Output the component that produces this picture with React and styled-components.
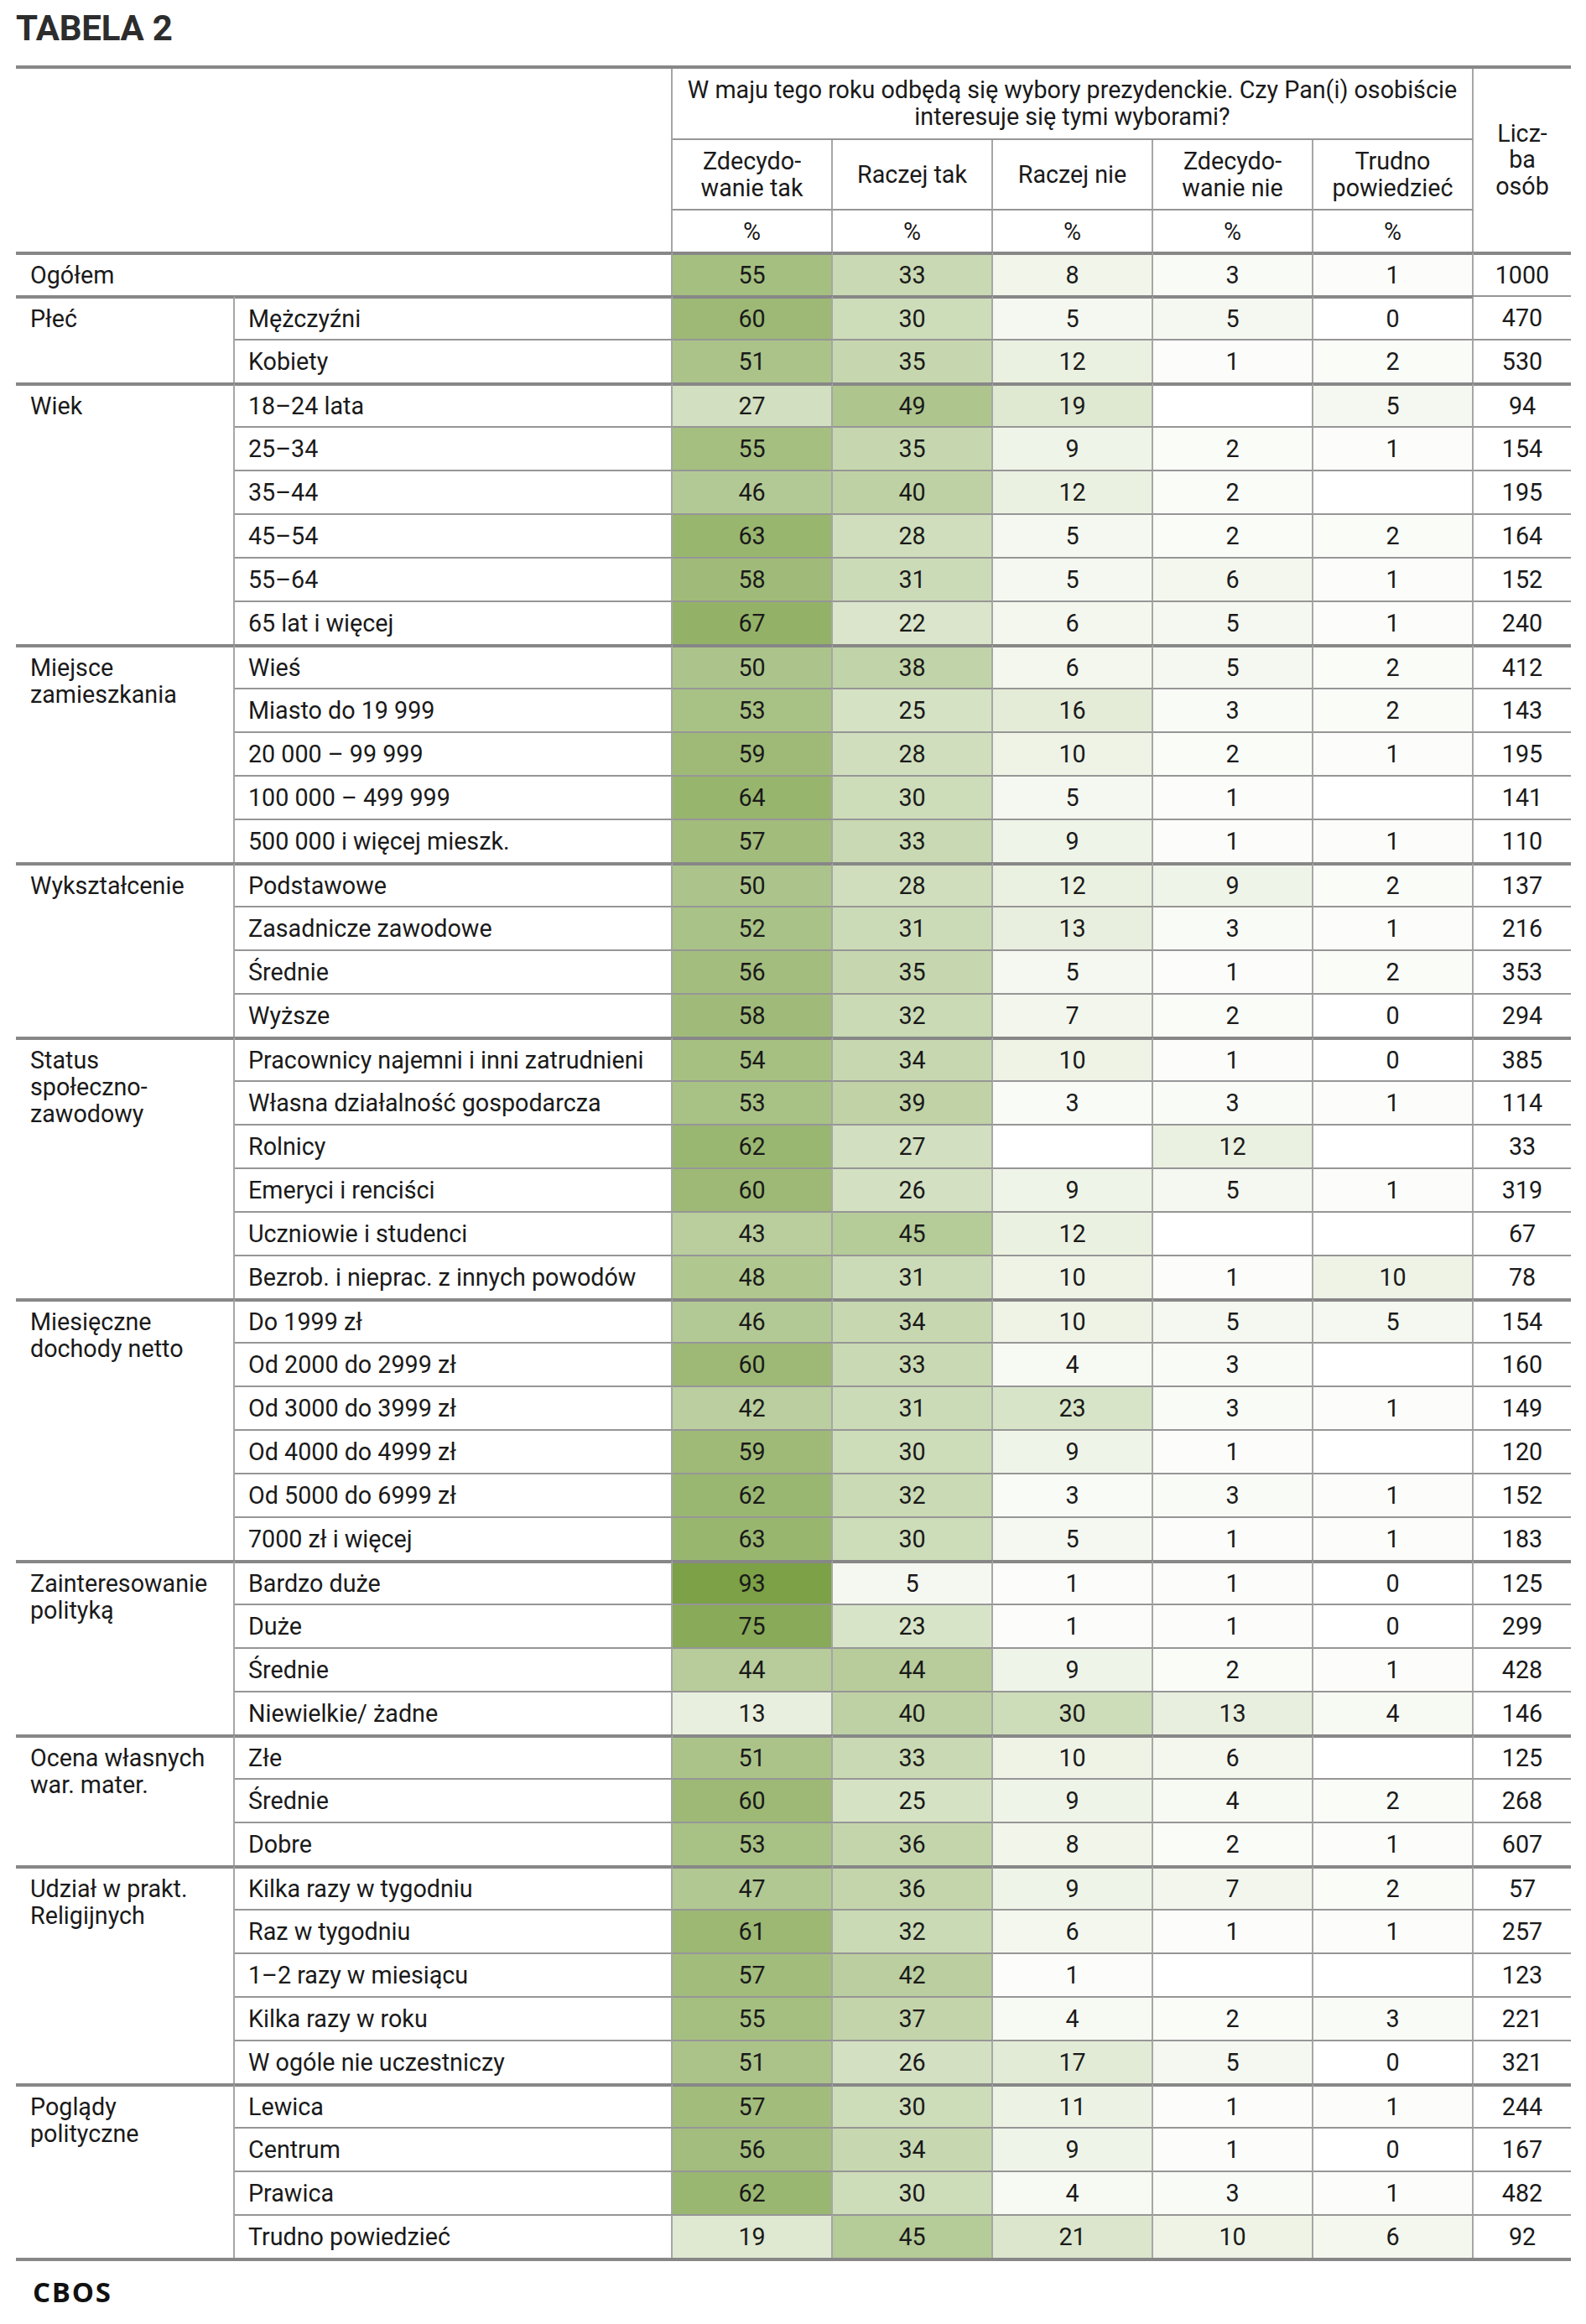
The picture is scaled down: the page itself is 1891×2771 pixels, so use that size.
import React from 'react';
import styled, { createGlobalStyle, css } from 'styled-components';

const GlobalStyle = createGlobalStyle`
  body {
    margin: 0;
    background: #fff;
    font-family: Roboto, "Liberation Sans", sans-serif;
    color: #1a1a1a;
  }
`;

const THICK = '4px solid #878787';
const THIN = '2px solid #969696';
const VLINE = '2px solid #a6a6a6';

// colour scale for the percentage cells
const stops = [
  [0, [255, 255, 255]],
  [1, [252, 253, 251]],
  [5, [245, 248, 240]],
  [10, [238, 243, 230]],
  [20, [221, 231, 207]],
  [30, [205, 220, 185]],
  [40, [190, 209, 164]],
  [50, [172, 196, 139]],
  [60, [157, 185, 117]],
  [75, [137, 170, 88]],
  [93, [124, 161, 70]],
  [100, [118, 156, 62]],
];

const shade = (v) => {
  if (v === null || v === undefined) return '#ffffff';
  for (let i = 1; i < stops.length; i++) {
    const [v1, c1] = stops[i];
    const [v0, c0] = stops[i - 1];
    if (v <= v1) {
      const t = (v - v0) / (v1 - v0);
      const c = c0.map((x, k) => Math.round(x + (c1[k] - x) * t));
      return `rgb(${c.join(',')})`;
    }
  }
  return 'rgb(118,156,62)';
};

const groups = [
  {
    label: 'Płeć',
    rows: [
      ['Mężczyźni', 60, 30, 5, 5, 0, 470],
      ['Kobiety', 51, 35, 12, 1, 2, 530],
    ],
  },
  {
    label: 'Wiek',
    rows: [
      ['18–24 lata', 27, 49, 19, null, 5, 94],
      ['25–34', 55, 35, 9, 2, 1, 154],
      ['35–44', 46, 40, 12, 2, null, 195],
      ['45–54', 63, 28, 5, 2, 2, 164],
      ['55–64', 58, 31, 5, 6, 1, 152],
      ['65 lat i więcej', 67, 22, 6, 5, 1, 240],
    ],
  },
  {
    label: ['Miejsce', 'zamieszkania'],
    rows: [
      ['Wieś', 50, 38, 6, 5, 2, 412],
      ['Miasto do 19 999', 53, 25, 16, 3, 2, 143],
      ['20 000 – 99 999', 59, 28, 10, 2, 1, 195],
      ['100 000 – 499 999', 64, 30, 5, 1, null, 141],
      ['500 000 i więcej mieszk.', 57, 33, 9, 1, 1, 110],
    ],
  },
  {
    label: 'Wykształcenie',
    rows: [
      ['Podstawowe', 50, 28, 12, 9, 2, 137],
      ['Zasadnicze zawodowe', 52, 31, 13, 3, 1, 216],
      ['Średnie', 56, 35, 5, 1, 2, 353],
      ['Wyższe', 58, 32, 7, 2, 0, 294],
    ],
  },
  {
    label: ['Status', 'społeczno-', 'zawodowy'],
    rows: [
      ['Pracownicy najemni i inni zatrudnieni', 54, 34, 10, 1, 0, 385],
      ['Własna działalność gospodarcza', 53, 39, 3, 3, 1, 114],
      ['Rolnicy', 62, 27, null, 12, null, 33],
      ['Emeryci i renciści', 60, 26, 9, 5, 1, 319],
      ['Uczniowie i studenci', 43, 45, 12, null, null, 67],
      ['Bezrob. i nieprac. z innych powodów', 48, 31, 10, 1, 10, 78],
    ],
  },
  {
    label: ['Miesięczne', 'dochody netto'],
    rows: [
      ['Do 1999 zł', 46, 34, 10, 5, 5, 154],
      ['Od 2000 do 2999 zł', 60, 33, 4, 3, null, 160],
      ['Od 3000 do 3999 zł', 42, 31, 23, 3, 1, 149],
      ['Od 4000 do 4999 zł', 59, 30, 9, 1, null, 120],
      ['Od 5000 do 6999 zł', 62, 32, 3, 3, 1, 152],
      ['7000 zł i więcej', 63, 30, 5, 1, 1, 183],
    ],
  },
  {
    label: ['Zainteresowanie', 'polityką'],
    rows: [
      ['Bardzo duże', 93, 5, 1, 1, 0, 125],
      ['Duże', 75, 23, 1, 1, 0, 299],
      ['Średnie', 44, 44, 9, 2, 1, 428],
      ['Niewielkie/ żadne', 13, 40, 30, 13, 4, 146],
    ],
  },
  {
    label: ['Ocena własnych', 'war. mater.'],
    rows: [
      ['Złe', 51, 33, 10, 6, null, 125],
      ['Średnie', 60, 25, 9, 4, 2, 268],
      ['Dobre', 53, 36, 8, 2, 1, 607],
    ],
  },
  {
    label: ['Udział w prakt.', 'Religijnych'],
    rows: [
      ['Kilka razy w tygodniu', 47, 36, 9, 7, 2, 57],
      ['Raz w tygodniu', 61, 32, 6, 1, 1, 257],
      ['1–2 razy w miesiącu', 57, 42, 1, null, null, 123],
      ['Kilka razy w roku', 55, 37, 4, 2, 3, 221],
      ['W ogóle nie uczestniczy', 51, 26, 17, 5, 0, 321],
    ],
  },
  {
    label: ['Poglądy', 'polityczne'],
    rows: [
      ['Lewica', 57, 30, 11, 1, 1, 244],
      ['Centrum', 56, 34, 9, 1, 0, 167],
      ['Prawica', 62, 30, 4, 3, 1, 482],
      ['Trudno powiedzieć', 19, 45, 21, 10, 6, 92],
    ],
  },
];

const answers = [
  ['Zdecydo-', 'wanie tak'],
  ['Raczej tak'],
  ['Raczej nie'],
  ['Zdecydo-', 'wanie nie'],
  ['Trudno', 'powiedzieć'],
];

const Page = styled.div`
  padding: 13px 18px 40px 19px;
  width: 1854px;
`;

const Title = styled.h1`
  margin: 0 0 23px;
  font-family: Roboto, "Liberation Sans", sans-serif;
  font-weight: 700;
  font-size: 42px;
  line-height: 42px;
  color: #2d2d2d;
  letter-spacing: -0.2px;
`;

const Grid = styled.div`
  display: grid;
  grid-template-columns: 261px 522px repeat(5, 191px) 116px;
  grid-template-rows: 85px 84px 49px repeat(46, 52px);
  border-top: ${THICK};
  border-bottom: ${THICK};
`;

const cellBase = css`
  box-sizing: border-box;
  display: flex;
  font-size: 28.7px;
  line-height: 32px;
  color: #1a1a1a;
  border-top: ${(p) => (p.$top === 'thick' ? THICK : p.$top === 'thin' ? THIN : 'none')};
  border-right: ${(p) => (p.$right ? VLINE : 'none')};
`;

const Corner = styled.div`
  grid-column: 1 / 3;
  grid-row: 1 / 4;
  border-right: ${VLINE};
`;

const Question = styled.div`
  ${cellBase};
  grid-column: 3 / 8;
  grid-row: 1;
  align-items: center;
  justify-content: center;
  text-align: center;
  padding: 0 12px 2px;
  border-right: ${VLINE};
  border-bottom: ${THIN};
`;

const CountHead = styled.div`
  ${cellBase};
  grid-column: 8;
  grid-row: 1 / 4;
  flex-direction: column;
  align-items: center;
  justify-content: center;
  text-align: center;
  line-height: 31.5px;
`;

const SubHead = styled.div`
  ${cellBase};
  flex-direction: column;
  align-items: center;
  justify-content: center;
  text-align: center;
  border-right: ${VLINE};
  border-bottom: ${THIN};
`;

const Unit = styled.div`
  ${cellBase};
  align-items: center;
  justify-content: center;
  border-right: ${VLINE};
`;

const TotalLabel = styled.div`
  ${cellBase};
  grid-column: 1 / 3;
  align-items: center;
  padding-left: 17px;
`;

const GroupLabel = styled.div`
  ${cellBase};
  grid-column: 1;
  grid-row: span ${(p) => p.$span};
  flex-direction: column;
  align-items: flex-start;
  padding: 8px 0 0 17px;
`;

const RowLabel = styled.div`
  ${cellBase};
  grid-column: 2;
  align-items: center;
  padding-left: 16px;
  white-space: nowrap;
`;

const Value = styled.div`
  ${cellBase};
  align-items: center;
  justify-content: center;
  background: ${(p) => p.$bg};
`;

const Count = styled.div`
  ${cellBase};
  align-items: center;
  justify-content: center;
`;

const Source = styled.div`
  margin: 20px 0 0 20px;
  font-family: "Open Sans", "DejaVu Sans", sans-serif;
  font-weight: 700;
  font-size: 33px;
  line-height: 33px;
  letter-spacing: 1.8px;
  color: #111;
`;

const DataCells = ({ values, top, countTop }) => (
  <>
    {values.slice(0, 5).map((v, i) => (
      <Value key={i} $top={top} $right $bg={shade(v)}>
        {v === null ? '' : v}
      </Value>
    ))}
    <Count $top={countTop || top}>{values[5]}</Count>
  </>
);

const App = () => {
  return (
    <Page>
      <GlobalStyle />
      <Title>TABELA 2</Title>
      <Grid>
        <Corner />
        <Question>
          W maju tego roku odbędą się wybory prezydenckie. Czy Pan(i) osobiście interesuje się tymi
          wyborami?
        </Question>
        <CountHead>
          <span>Licz-</span>
          <span>ba</span>
          <span>osób</span>
        </CountHead>
        {answers.map((a, i) => (
          <SubHead key={i}>
            {a.map((line) => (
              <span key={line}>{line}</span>
            ))}
          </SubHead>
        ))}
        {answers.map((a, i) => (
          <Unit key={i}>%</Unit>
        ))}

        <TotalLabel $top="thick" $right>Ogółem</TotalLabel>
        <DataCells values={[55, 33, 8, 3, 1, 1000]} top="thick" />

        {groups.map((g, gi) => (
          <React.Fragment key={gi}>
            <GroupLabel $top="thick" $right $span={g.rows.length}>
              {(Array.isArray(g.label) ? g.label : [g.label]).map((line) => (
                <span key={line}>{line}</span>
              ))}
            </GroupLabel>
            {g.rows.map((r, ri) => (
              <React.Fragment key={ri}>
                <RowLabel $top={ri === 0 ? 'thick' : 'thin'} $right>
                  {r[0]}
                </RowLabel>
                <DataCells
                  values={r.slice(1)}
                  top={ri === 0 ? 'thick' : 'thin'}
                  countTop={gi === 0 && ri === 0 ? 'thin' : undefined}
                />
              </React.Fragment>
            ))}
          </React.Fragment>
        ))}
      </Grid>
      <Source>CBOS</Source>
    </Page>
  );
};

export default App;
